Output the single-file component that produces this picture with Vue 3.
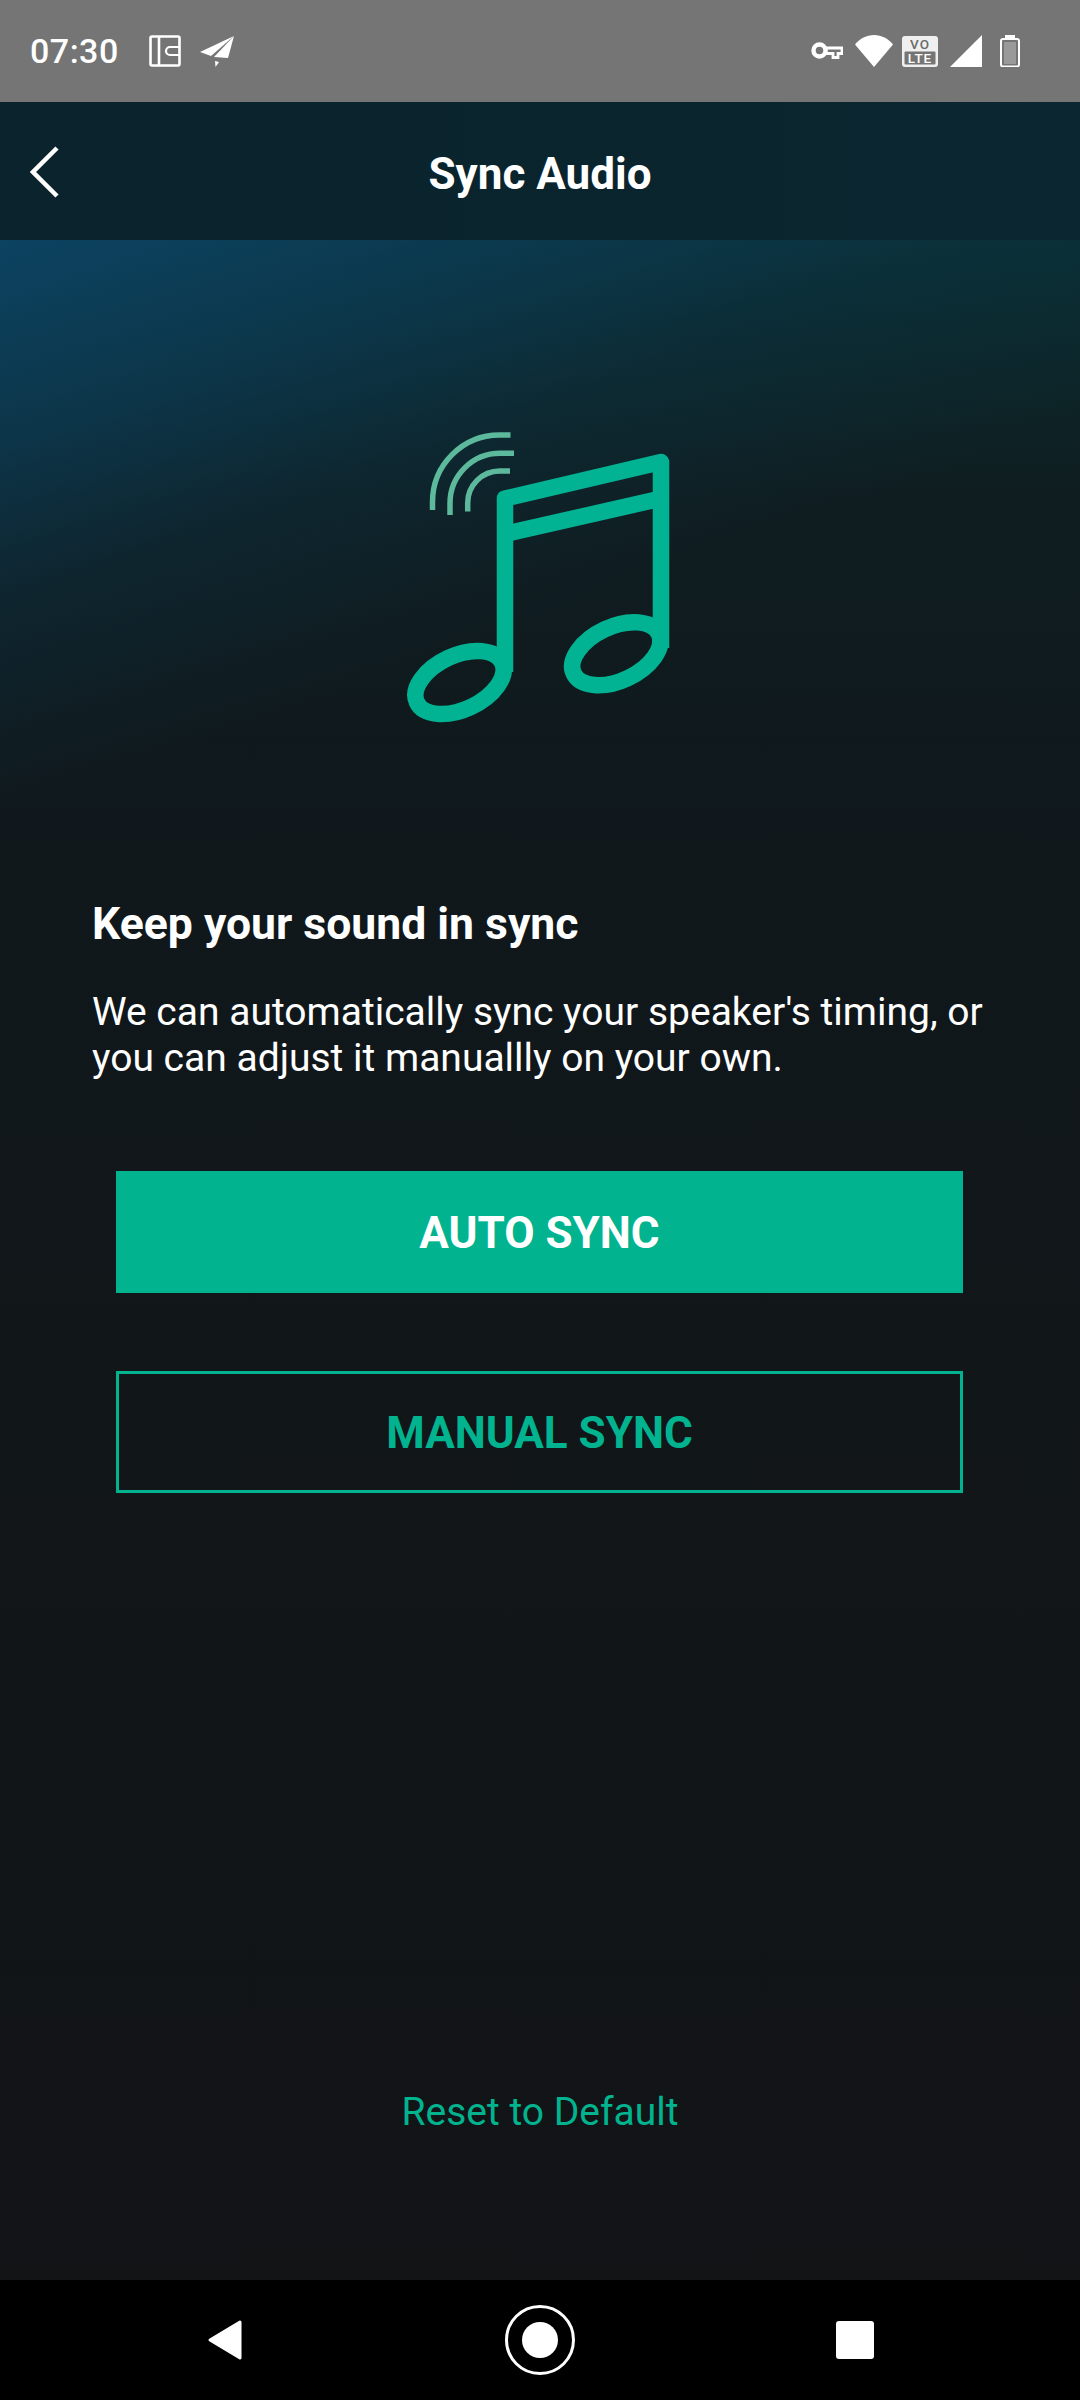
<template>
  <div class="screen">
    <div class="status-bar">
      <span class="time">07:30</span>
      <svg class="wallet" width="32" height="32" viewBox="0 0 32 32">
        <rect x="1.500" y="1.500" width="29" height="29" rx="1.500" fill="none" stroke="#fff" stroke-width="2.600" />
        <path d="M10 2V30" stroke="#fff" stroke-width="2.600" />
        <path d="M30 12H21a4 4 0 0 0 0 8h9" fill="none" stroke="#fff" stroke-width="2.200" />
      </svg>
      <svg class="plane" width="34" height="31" viewBox="0 0 34 31">
        <path d="M34 0L0 16L11 20Z" fill="#fff" />
        <path d="M34 0L14 21L28 22Z" fill="#fff" />
        <path d="M15 25L15.500 31L19 26Z" fill="#fff" />
      </svg>
      <div class="status-right">
        <svg class="key" width="32" height="20" viewBox="0 0 32 20">
          <circle cx="8.500" cy="9.500" r="6" fill="none" stroke="#fff" stroke-width="4.400" />
          <path d="M15 7H31V12.500H27V16.500H22V12.500H15Z" fill="none" stroke="#fff" stroke-width="2.800" />
        </svg>
        <svg class="wifi" width="38" height="32" viewBox="0 0 38 32">
          <path d="M19 32L0 9.500C5 3.500 11.500 0 19 0s14 3.500 19 9.500Z" fill="#fff" />
        </svg>
        <svg class="volte" width="36" height="31" viewBox="0 0 36 31">
          <rect width="36" height="31" rx="3" fill="#f0f0f0" />
          <rect x="2.500" y="15.500" width="31" height="13" rx="1" fill="#757575" />
          <text x="18" y="13" class="volte-top">VO</text>
          <text x="18" y="27" class="volte-bottom">LTE</text>
        </svg>
        <svg class="signal" width="32" height="32" viewBox="0 0 32 32">
          <path d="M32 0V32H0Z" fill="#fff" />
        </svg>
        <svg class="battery" width="20" height="32" viewBox="0 0 20 32">
          <rect x="5" y="0" width="10" height="3" fill="#fff" />
          <rect x="1" y="4" width="18" height="27.500" rx="2" fill="none" stroke="#fff" stroke-width="2" />
          <rect x="4" y="7" width="12" height="22" fill="#9a9a9a" />
        </svg>
      </div>
    </div>

    <header class="app-bar">
      <svg class="back" width="30" height="52" viewBox="0 0 30 52">
        <path d="M27 2L3 26L27 50" fill="none" stroke="#fff" stroke-width="4.500" />
      </svg>
      <h1 class="title">Sync Audio</h1>
    </header>

    <main class="content">
      <svg class="note" width="320" height="320" viewBox="0 0 320 320">
        <g fill="none" stroke="#5cb99b" stroke-width="5.500">
          <path d="M52.500 100V92A67 67 0 0 1 119.500 25H130.500" />
          <path d="M70 105V93A50 50 0 0 1 120 43.300H134" />
          <path d="M87.700 101.500V93A32 32 0 0 1 119.700 61H130" />
        </g>
        <g fill="none" stroke="#02b393" stroke-width="16.500" stroke-linejoin="round">
          <path d="M125 262V88.600L281 52V238" />
          <path d="M125 124L281 88.500" />
          <ellipse cx="79.500" cy="272.500" rx="47" ry="27" transform="rotate(-25 79.500 272.500)" />
          <ellipse cx="236.300" cy="243.700" rx="47" ry="27" transform="rotate(-25 236.300 243.700)" />
        </g>
      </svg>

      <section class="copy">
        <h2 class="heading">Keep your sound in sync</h2>
        <p class="body-text">We can automatically sync your speaker's timing, or you can adjust it manuallly on your own.</p>
      </section>

      <div class="actions">
        <button class="btn btn-solid">AUTO SYNC</button>
        <button class="btn btn-outline">MANUAL SYNC</button>
      </div>

      <a class="reset">Reset to Default</a>
    </main>

    <nav class="nav-bar">
      <svg width="36" height="42" viewBox="0 0 36 42">
        <path d="M33 3L3 21L33 39Z" fill="#fff" stroke="#fff" stroke-width="3" stroke-linejoin="round" />
      </svg>
      <svg width="72" height="72" viewBox="0 0 72 72">
        <circle cx="36" cy="36" r="33.500" fill="none" stroke="#fff" stroke-width="3" />
        <circle cx="36" cy="36" r="18" fill="#fff" />
      </svg>
      <div class="square"></div>
    </nav>
  </div>
</template>

<script setup>
</script>

<style>
html,
body {
  margin: 0;
  background: #121416;
}
</style>

<style scoped>
.screen {
  width: 1080px;
  height: 2400px;
  display: flex;
  flex-direction: column;
  font-family: Roboto, "Liberation Sans", sans-serif;
  color: #fff;
  overflow: hidden;
}

.status-bar {
  height: 102px;
  box-sizing: border-box;
  padding: 0 60px 0 30px;
  display: flex;
  align-items: center;
  background: #757575;
}

.time {
  font-size: 34px;
  font-weight: 500;
  line-height: 102px;
  letter-spacing: 0.5px;
}

.wallet {
  margin-left: 30px;
}

.plane {
  margin-left: 19px;
}

.status-right {
  margin-left: auto;
  display: flex;
  align-items: center;
}

.wifi {
  margin-left: 12px;
}

.volte {
  margin-left: 9px;
}

.signal {
  margin-left: 12px;
}

.battery {
  margin-left: 18px;
}

.volte-top,
.volte-bottom {
  font-family: Roboto, sans-serif;
  font-weight: 500;
  font-size: 13.500px;
  letter-spacing: 1px;
  text-anchor: middle;
}

.volte-top {
  fill: #6a6a6a;
}

.volte-bottom {
  fill: #fff;
}

.app-bar {
  height: 138px;
  box-sizing: border-box;
  padding-top: 6px;
  position: relative;
  display: flex;
  align-items: center;
  justify-content: center;
  background: linear-gradient(90deg, #0a232c, #0b2630);
}

.back {
  position: absolute;
  left: 30px;
  top: 44px;
}

.title {
  margin: 0;
  font-size: 44px;
  font-weight: 700;
  line-height: 56px;
}

.content {
  flex: 1;
  display: flex;
  flex-direction: column;
  align-items: stretch;
  background:
    linear-gradient(160deg, rgba(12, 68, 100, 0.95) 0, rgba(12, 60, 86, 0.7) 200px, rgba(12, 54, 76, 0.35) 340px, rgba(12, 50, 70, 0) 540px),
    linear-gradient(180deg, #0a2d2f 0, #0f1d20 260px, #10181c 620px, #111619 1100px, #121416 100%);
}

.note {
  align-self: flex-start;
  margin: 170px 0 0 380px;
}

.copy {
  margin: 166px 92px 0;
}

.heading {
  margin: 0;
  font-size: 44.500px;
  font-weight: 700;
  line-height: 56px;
}

.body-text {
  margin: 37px 0 0;
  font-size: 39px;
  font-weight: 400;
  line-height: 46px;
}

.actions {
  margin: 90px 117px 0 116px;
  display: flex;
  flex-direction: column;
  gap: 78px;
}

.btn {
  height: 122px;
  box-sizing: border-box;
  padding: 2px 0 0;
  font-family: inherit;
  font-size: 44px;
  font-weight: 700;
  border-radius: 0;
}

.btn-solid {
  border: 0;
  background: #02b38f;
  color: #fff;
}

.btn-outline {
  border: 3px solid #02b38f;
  background: transparent;
  color: #02b38f;
}

.reset {
  margin-top: 595px;
  text-align: center;
  font-size: 39px;
  line-height: 48px;
  color: #02b38f;
}

.nav-bar {
  height: 120px;
  background: #000;
  display: flex;
  align-items: center;
  justify-content: space-between;
  padding: 0 206px 0 207px;
  box-sizing: border-box;
}

.square {
  width: 38px;
  height: 38px;
  border-radius: 3px;
  background: #fff;
}
</style>
